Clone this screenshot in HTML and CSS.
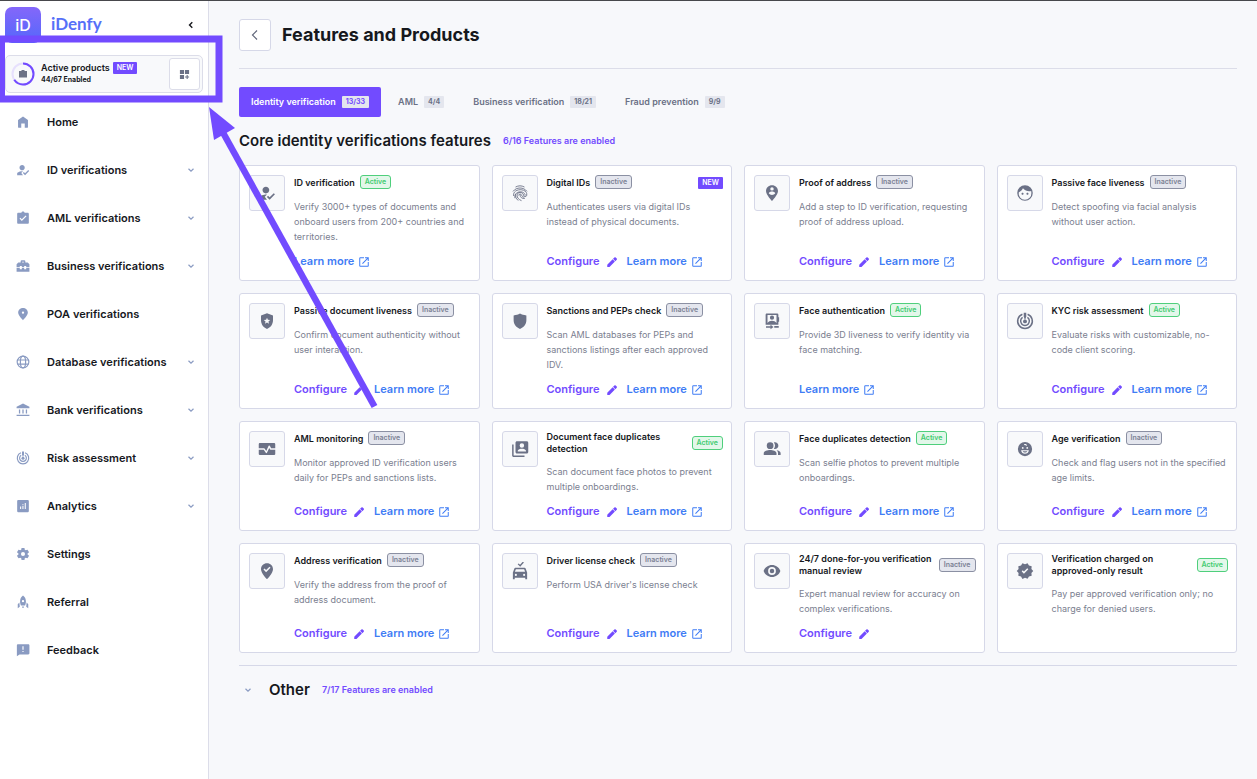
FILE: index.html
```html
<!DOCTYPE html>
<html lang="en">
<head>
  <meta charset="UTF-8">
  <meta name="viewport" content="width=device-width, initial-scale=1">
  <title>Features and Products</title>
  <link rel="stylesheet" href="styles.css">
</head>
<body>
  <!-- icon sprite -->
  <svg class="sprite" aria-hidden="true">
    <symbol id="i-home" viewBox="0 0 24 24"><path d="M12 2.500 3.500 8.500V21a.8.8 0 0 0 .8.8H9V14.500h6v7.300h4.700a.8.8 0 0 0 .8-.8V8.500z"/></symbol>
    <symbol id="i-user-check" viewBox="0 0 24 24"><path d="M9 17l3-2.940c-.39-.04-.68-.06-1-.06-2.670 0-9 1.340-9 4v3h10l-3-4zM10.500 12.500c2.500 0 4.500-2 4.500-4.500s-2-4.500-4.500-4.500S6 5.500 6 8s2 4.500 4.500 4.500zM15.500 21L11.800 17.200l1.600-1.600 2.100 2.100 5.500-5.500 1.600 1.600z"/></symbol>
    <symbol id="i-clipboard" viewBox="0 0 24 24"><path d="M20 3h-5.200C14.400 1.840 13.300 1 12 1s-2.400.84-2.820 2H4c-1.100 0-2 .9-2 2v15c0 1.100.9 2 2 2h16c1.100 0 2-.9 2-2V5c0-1.100-.9-2-2-2zM10 17l-4-4 1.410-1.410L10 14.170l6.590-6.590L18 9l-8 8z"/></symbol>
    <symbol id="i-briefcase" viewBox="0 0 24 24"><path fill-rule="evenodd" d="M16 6V4a2 2 0 0 0-2-2h-4a2 2 0 0 0-2 2v2H4L1 9v5h5.500v-2H10v2h4v-2h3.500v2H23V9l-3-3zm-5.500-1.500h3V6h-3zM1 15.500h5.500v2H10v-2h4v2h3.500v-2H23V22H1z"/></symbol>
    <symbol id="i-pin" viewBox="0 0 24 24"><path d="M12 1.500c-4.500 0-8.300 3.400-8.300 8C3.700 14.500 12 22.500 12 22.500s8.300-8 8.300-13c0-4.600-3.800-8-8.300-8zm0 10a2 2 0 1 1 0-4 2 2 0 0 1 0 4z"/></symbol>
    <symbol id="i-globe" viewBox="0 0 24 24"><g fill="none" stroke="currentColor" stroke-width="2"><circle cx="12" cy="12" r="10"/><ellipse cx="12" cy="12" rx="4.500" ry="10"/><path d="M2.500 8.500h19M2.500 15.500h19"/></g></symbol>
    <symbol id="i-bank" viewBox="0 0 24 24"><path d="M12 1 1 6.500V9h22V6.500zM5 11h2.200v7H5zM10.900 11h2.200v7h-2.200zM16.800 11H19v7h-2.200zM1 20h22v2.200H1z"/></symbol>
    <symbol id="i-radar" viewBox="0 0 24 24"><g fill="none" stroke="currentColor" stroke-width="2"><path d="M8.500 3A9.800 9.800 0 1 0 15.500 3"/><path d="M8.800 7.200a5.800 5.800 0 1 0 6.400 0"/></g><circle cx="12" cy="12.500" r="2.600"/><path d="M10.300 1h3.400v5L12 11l-1.700-5z"/></symbol>
    <symbol id="i-analytics" viewBox="0 0 24 24"><path fill-rule="evenodd" d="M4 1.500h16a2 2 0 0 1 2 2v17a2 2 0 0 1-2 2H4a2 2 0 0 1-2-2v-17c0-1.100.9-2 2-2zM7 13v4h1.800v-4zm4-1v5h1.800v-5zm0-3v1.800h1.800V9zm4-2v10h1.800V7z"/></symbol>
    <symbol id="i-gear" viewBox="1 1 22 22"><path d="M19.140 12.940c.04-.3.06-.61.06-.94 0-.32-.02-.64-.07-.94l2.030-1.580c.18-.14.23-.41.12-.61l-1.920-3.320c-.12-.22-.37-.29-.59-.22l-2.390.96c-.5-.38-1.030-.7-1.620-.94l-.36-2.540c-.04-.24-.24-.41-.48-.41h-3.840c-.24 0-.43.17-.47.41l-.36 2.540c-.59.24-1.130.57-1.620.94l-2.390-.96c-.22-.08-.47 0-.59.22L2.740 8.870c-.12.21-.08.47.12.61l2.030 1.580c-.05.3-.09.63-.09.94s.02.64.07.94l-2.030 1.580c-.18.14-.23.41-.12.61l1.920 3.320c.12.22.37.29.59.22l2.390-.96c.5.38 1.030.7 1.620.94l.36 2.540c.05.24.24.41.48.41h3.840c.24 0 .44-.17.47-.41l.36-2.540c.59-.24 1.130-.56 1.620-.94l2.390.96c.22.08.47 0 .59-.22l1.920-3.320c.12-.22.07-.47-.12-.61l-2.010-1.580zM12 15.200a3.200 3.200 0 1 1 0-6.400 3.200 3.200 0 0 1 0 6.400z"/></symbol>
    <symbol id="i-rocket" viewBox="0 0 24 24"><path fill-rule="evenodd" d="M12 1c-3.500 2.500-5 6-5 10 0 3 .7 5 1.500 7h7c.8-2 1.500-4 1.500-7 0-4-1.500-7.500-5-10zm0 7.500a2 2 0 1 1 0 4 2 2 0 0 1 0-4z"/><path d="M5.800 13 3 16v6.500l3.500-2.500zM18.200 13l2.800 3v6.500L17.500 20zM10.500 19.500h3V22h-3z"/></symbol>
    <symbol id="i-feedback" viewBox="0 0 24 24"><path d="M21 2H3.500c-1.100 0-2 .9-2 2v18.500L6 19.500h15c1.100 0 2-.9 2-2V4c0-1.100-.9-2-2-2zm-8 13.500h-2v-2h2v2zm0-4h-2v-6h2v6z"/></symbol>
    <symbol id="i-chevron" viewBox="0 0 10 10"><path d="M2.500 3.800 5 6.200l2.500-2.400" fill="none" stroke="currentColor" stroke-width="1.200"/></symbol>
    <symbol id="i-fingerprint" viewBox="0 0 24 24"><g fill="none" stroke="currentColor" stroke-width="1.200" stroke-linecap="round"><path d="M6.500 3.800c3.500-1.900 7.500-1.900 11 0M3 9.500C7 3.800 17 3.800 21 9.500M3.500 15.500C1.500 5 22.500 5 21 15c-.4 2.400-3.700 2.400-4.300 0C16.300 10 8 10 8 15c.2 3.300 2 5.600 5.500 7"/><path d="M5.200 18.500C3 8.500 19 8 18.900 15M12 15c.2 3 2.800 4.700 6 4.200M9.200 21.700c-3-3-3.500-5.200-3.200-7.700M10 14.800c.5-2 3.700-2 4.200.2.300 1.500 1.400 2.400 2.800 2.500"/></g></symbol>
    <symbol id="i-pin-person" viewBox="0 0 24 24"><path fill-rule="evenodd" d="M12 1.500c-4.500 0-8 3.300-8 7.800C4 14.500 12 22.500 12 22.500s8-8 8-13.200c0-4.500-3.500-7.800-8-7.800zM12 4.200a2.300 2.300 0 1 1 0 4.600 2.300 2.300 0 0 1 0-4.600zm0 10.300c-1.700 0-3.300-.8-4.300-2.200.1-1.400 2.800-2.200 4.300-2.200s4.200.8 4.300 2.200c-1 1.400-2.600 2.200-4.300 2.200z"/></symbol>
    <symbol id="i-face" viewBox="1 1 22 22"><path d="M9 11.750c-.69 0-1.250.56-1.250 1.250s.56 1.250 1.250 1.250 1.250-.56 1.250-1.250-.56-1.250-1.250-1.250zm6 0c-.69 0-1.250.56-1.250 1.250s.56 1.250 1.250 1.250 1.250-.56 1.250-1.250-.56-1.250-1.250-1.250z"/><path fill-rule="evenodd" d="M12 2.500a9.500 9.500 0 1 0 0 19 9.500 9.500 0 0 0 0-19zM4.300 11.300c2.300-1 4.200-2.800 5.200-5 1.900 2.300 4.700 3.700 7.900 3.700.8 0 1.500-.1 2.100-.3.200.7.300 1.500.3 2.300a7.800 7.800 0 1 1-15.500-.7z"/></symbol>
    <symbol id="i-shield-star" viewBox="0 0 24 24"><path fill-rule="evenodd" d="M12 1.500 4 4.500v6.500c0 5.300 3.400 10 8 11.500 4.600-1.500 8-6.200 8-11.500V4.500zm0 6 1.200 2.900 3.100.2-2.400 2 .8 3-2.700-1.600-2.700 1.600.8-3-2.400-2 3.100-.2z"/></symbol>
    <symbol id="i-shield" viewBox="0 0 24 24"><path d="M12 2C9.500 3.500 7 4 3.500 4.500V11c0 6 4 9.700 8.500 11.500 4.500-1.800 8.500-5.500 8.500-11.500V4.500C17 4 14.500 3.500 12 2z"/></symbol>
    <symbol id="i-face-auth" viewBox="0 0 24 24"><path fill-rule="evenodd" d="M5 2h14a1.500 1.500 0 0 1 1.500 1.500V7h1v6h-1v4H3.500V3.500C3.500 2.700 4.200 2 5 2zm1 2v10.500c1.500-2 3.500-3 6-3s4.500 1 6 3V4zm6 .8a2.800 2.800 0 1 1 0 5.600 2.800 2.800 0 0 1 0-5.600z"/><path d="M4 19h6v-2l4 3-4 3v-2H4zM15 18.500h6V21h-6z"/></symbol>
    <symbol id="i-pulse" viewBox="0 0 24 24"><path d="M2.500 4h19A1.500 1.500 0 0 1 23 5.500V11h-5.500l-1.700-3.200a1 1 0 0 0-1.800.1l-3 6.600-2-3a1 1 0 0 0-.8-.5H1V5.500C1 4.700 1.700 4 2.500 4zM1 13h6.700l2.700 3.900a1 1 0 0 0 1.700-.2l2.900-6.200 1.200 2c.2.300.500.500.8.500h6v5.500a1.500 1.500 0 0 1-1.500 1.500h-19A1.500 1.500 0 0 1 1 18.500z"/></symbol>
    <symbol id="i-copy-face" viewBox="0 0 24 24"><path fill-rule="evenodd" d="M3.500 6H1.500v14.500c0 1.100.9 2 2 2H18v-2H3.500zM21 1.500H8c-1.100 0-2 .9-2 2V16c0 1.100.9 2 2 2h13c1.100 0 2-.9 2-2V3.500c0-1.100-.9-2-2-2zm-6.500 2.800a3 3 0 1 1 0 6 3 3 0 0 1 0-6zm5.500 11H9v-1c0-2 3.500-2.800 5.500-2.800s5.500.8 5.500 2.800z"/></symbol>
    <symbol id="i-group" viewBox="0 0 24 24"><circle cx="9.500" cy="7.500" r="4.500"/><path d="M1 20v-2.500c0-3 5-4.300 8.500-4.300s8.500 1.300 8.500 4.300V20zM14.500 3.300c3-1 6 1.300 6 4.200s-3 5.200-6 4.200c2-2.500 2-6 0-8.400zM18 13.600c3 .5 5.500 1.600 5.500 3.900V20H20v-2.500c0-1.600-.7-2.900-2-3.900z"/></symbol>
    <symbol id="i-age" viewBox="0 0 24 24"><path fill-rule="evenodd" d="M12 2.500a9.500 9.500 0 1 0 0 19 9.500 9.500 0 0 0 0-19zM10.500 6c2-1.300 4.300-.3 4 1.700l-1.500-.2c0-.8-.7-1-1.500-.4zM9 9.300a1.200 1.200 0 1 1 0 2.400 1.200 1.200 0 0 1 0-2.400zm6 0a1.200 1.200 0 1 1 0 2.400 1.200 1.200 0 0 1 0-2.400zM6.800 13.500h10.400c-.4 3-2.500 4.800-5.200 4.800s-4.800-1.800-5.200-4.800zm2.200 1.400c.7 1.300 1.700 1.900 3 1.900s2.300-.6 3-1.900z"/></symbol>
    <symbol id="i-pin-check" viewBox="0 0 24 24"><path d="M12 1.500c-4.500 0-8 3.400-8 8C4 15 12 22.800 12 22.800S20 15 20 9.500c0-4.600-3.500-8-8-8zm-1.200 12L7.300 10l1.400-1.400 2.100 2.100 4.500-4.500 1.400 1.400z"/></symbol>
    <symbol id="i-car" viewBox="0 0 24 24"><path fill-rule="evenodd" d="M19.500 8.500c-.2-.6-.7-1-1.300-1H5.800c-.6 0-1.100.4-1.300 1L2.500 14v9H5v-2h14v2h2.500v-9zM6.500 9.500h11l1.300 3.500H5.200zM6.500 15.800a1.400 1.400 0 1 1 0 2.800 1.400 1.400 0 0 1 0-2.800zm11 0a1.400 1.400 0 1 1 0 2.800 1.400 1.400 0 0 1 0-2.800z"/><path d="m9.500 2.500 2.700 2.500L16.500 0" fill="none" stroke="currentColor" stroke-width="1.800"/></symbol>
    <symbol id="i-eye" viewBox="0 0 24 24"><path d="M12 4C7 4 2.500 7.300.8 12c1.700 4.700 6.200 8 11.200 8s9.500-3.300 11.200-8C21.500 7.300 17 4 12 4zm0 13.200a5.200 5.200 0 1 1 0-10.400 5.200 5.200 0 0 1 0 10.400zM12 9a3 3 0 1 0 0 6 3 3 0 0 0 0-6z"/></symbol>
    <symbol id="i-verified" viewBox="0 0 24 24"><path d="M23 12l-2.440-2.790.34-3.690-3.610-.82-1.890-3.200L12 2.960 8.600 1.500 6.710 4.690 3.100 5.500l.34 3.700L1 12l2.440 2.790-.34 3.700 3.610.82L8.600 22.500l3.400-1.470 3.400 1.460 1.890-3.190 3.610-.82-.34-3.690L23 12zM10.600 15.500l-3-3L9 11.100l1.600 1.600L15 8.300l1.400 1.400z"/></symbol>
    <symbol id="i-edit" viewBox="0 0 24 24"><path d="M2.500 17.500v4.300H7L17.800 11 13.300 6.500zM21.500 7.500c.7-.7.7-1.700 0-2.400l-2.200-2.200c-.7-.7-1.700-.7-2.400 0l-2.800 2.800 4.600 4.600z"/></symbol>
    <symbol id="i-open" viewBox="0 0 24 24"><path d="M19.500 19.500h-15v-15H12v-2H4.500a2 2 0 0 0-2 2v15a2 2 0 0 0 2 2h15c1.100 0 2-.9 2-2V12h-2v7.500zM14 2.500v2h4l-9.800 9.800 1.500 1.500L19.500 6v4h2V2.500z"/></symbol>
  </svg>

  <div class="layout">
    <aside class="sidebar">
      <div class="brand">
        <a class="brand-link" href="#">
          <span class="brand-tile">iD</span>
          <span class="brand-name">iDenfy</span>
        </a>
        <button class="collapse" aria-label="Collapse menu"><svg viewBox="0 0 12 12"><path d="M7.300 3.200 4.500 6l2.800 2.800" fill="none" stroke="currentColor" stroke-width="1.400"/></svg></button>
      </div>

      <div class="products">
        <svg class="ring" viewBox="0 0 24 24">
          <circle class="ring-track" cx="12" cy="12" r="10.500"/>
          <circle class="ring-value" cx="12" cy="12" r="10.500" pathLength="67" stroke-dasharray="44 67" transform="rotate(-90 12 12)"/>
          <path class="ring-bag" d="M10.500 9V8h3v1H16v6.500H8V9z"/>
        </svg>
        <div class="products-text">
          <div class="products-title">Active products <span class="new">NEW</span></div>
          <div class="products-count">44/67 Enabled</div>
        </div>
        <button class="products-btn" aria-label="Manage products"><svg viewBox="0 0 12 12"><path d="M1 1h4.500v4.500H1zM6.500 1H11v4.500H6.500zM1 6.500h4.500V11H1zM8.300 6.500h1.200v1.700H11v1.200H9.500V11H8.300V9.400H6.600V8.200h1.700z"/></svg></button>
      </div>

      <nav class="nav">
        <a class="nav-item" href="#"><svg class="nav-icon"><use href="#i-home"/></svg><span>Home</span></a>
        <button class="nav-item"><svg class="nav-icon"><use href="#i-user-check"/></svg><span>ID verifications</span><svg class="chevron"><use href="#i-chevron"/></svg></button>
        <button class="nav-item"><svg class="nav-icon"><use href="#i-clipboard"/></svg><span>AML verifications</span><svg class="chevron"><use href="#i-chevron"/></svg></button>
        <button class="nav-item"><svg class="nav-icon"><use href="#i-briefcase"/></svg><span>Business verifications</span><svg class="chevron"><use href="#i-chevron"/></svg></button>
        <a class="nav-item" href="#"><svg class="nav-icon"><use href="#i-pin"/></svg><span>POA verifications</span></a>
        <button class="nav-item"><svg class="nav-icon"><use href="#i-globe"/></svg><span>Database verifications</span><svg class="chevron"><use href="#i-chevron"/></svg></button>
        <button class="nav-item"><svg class="nav-icon"><use href="#i-bank"/></svg><span>Bank verifications</span><svg class="chevron"><use href="#i-chevron"/></svg></button>
        <button class="nav-item"><svg class="nav-icon"><use href="#i-radar"/></svg><span>Risk assessment</span><svg class="chevron"><use href="#i-chevron"/></svg></button>
        <button class="nav-item"><svg class="nav-icon"><use href="#i-analytics"/></svg><span>Analytics</span><svg class="chevron"><use href="#i-chevron"/></svg></button>
        <a class="nav-item" href="#"><svg class="nav-icon"><use href="#i-gear"/></svg><span>Settings</span></a>
        <a class="nav-item" href="#"><svg class="nav-icon"><use href="#i-rocket"/></svg><span>Referral</span></a>
        <a class="nav-item" href="#"><svg class="nav-icon"><use href="#i-feedback"/></svg><span>Feedback</span></a>
      </nav>
    </aside>

    <main class="main">
      <header class="page-head">
        <button class="back" aria-label="Back"><svg viewBox="0 0 12 12"><path d="M8 1.500 3.500 6 8 10.500" fill="none" stroke="currentColor" stroke-width="1.200"/></svg></button>
        <h1>Features and Products</h1>
      </header>

      <div class="tabs">
        <button class="tab active">Identity verification <span class="tab-count">13/33</span></button>
        <button class="tab">AML <span class="tab-count">4/4</span></button>
        <button class="tab">Business verification <span class="tab-count">18/21</span></button>
        <button class="tab">Fraud prevention <span class="tab-count">9/9</span></button>
      </div>

      <div class="section-head">
        <h2>Core identity verifications features</h2>
        <span class="enabled">6/16 Features are enabled</span>
      </div>

      <div class="grid">
        <article class="card">
          <div class="card-icon"><svg><use href="#i-user-check"/></svg></div>
          <div class="card-body">
            <div class="card-head"><h3>ID verification</h3><span class="badge on">Active</span></div>
            <p>Verify 3000+ types of documents and onboard users from 200+ countries and territories.</p>
            <div class="links"><a class="learn" href="#">Learn more<svg><use href="#i-open"/></svg></a></div>
          </div>
        </article>
        <article class="card">
          <div class="card-icon"><svg><use href="#i-fingerprint"/></svg></div>
          <div class="card-body">
            <div class="card-head"><h3>Digital IDs</h3><span class="badge">Inactive</span><span class="new">NEW</span></div>
            <p>Authenticates users via digital IDs instead of physical documents.</p>
            <div class="links"><a class="configure" href="#">Configure<svg><use href="#i-edit"/></svg></a><a class="learn" href="#">Learn more<svg><use href="#i-open"/></svg></a></div>
          </div>
        </article>
        <article class="card">
          <div class="card-icon"><svg><use href="#i-pin-person"/></svg></div>
          <div class="card-body">
            <div class="card-head"><h3>Proof of address</h3><span class="badge">Inactive</span></div>
            <p>Add a step to ID verification, requesting proof of address upload.</p>
            <div class="links"><a class="configure" href="#">Configure<svg><use href="#i-edit"/></svg></a><a class="learn" href="#">Learn more<svg><use href="#i-open"/></svg></a></div>
          </div>
        </article>
        <article class="card">
          <div class="card-icon"><svg><use href="#i-face"/></svg></div>
          <div class="card-body">
            <div class="card-head"><h3>Passive face liveness</h3><span class="badge">Inactive</span></div>
            <p>Detect spoofing via facial analysis without user action.</p>
            <div class="links"><a class="configure" href="#">Configure<svg><use href="#i-edit"/></svg></a><a class="learn" href="#">Learn more<svg><use href="#i-open"/></svg></a></div>
          </div>
        </article>

        <article class="card">
          <div class="card-icon"><svg><use href="#i-shield-star"/></svg></div>
          <div class="card-body">
            <div class="card-head"><h3>Passive document liveness</h3><span class="badge">Inactive</span></div>
            <p>Confirm document authenticity without user interaction.</p>
            <div class="links"><a class="configure" href="#">Configure<svg><use href="#i-edit"/></svg></a><a class="learn" href="#">Learn more<svg><use href="#i-open"/></svg></a></div>
          </div>
        </article>
        <article class="card">
          <div class="card-icon"><svg><use href="#i-shield"/></svg></div>
          <div class="card-body">
            <div class="card-head"><h3>Sanctions and PEPs check</h3><span class="badge">Inactive</span></div>
            <p>Scan AML databases for PEPs and sanctions listings after each approved IDV.</p>
            <div class="links"><a class="configure" href="#">Configure<svg><use href="#i-edit"/></svg></a><a class="learn" href="#">Learn more<svg><use href="#i-open"/></svg></a></div>
          </div>
        </article>
        <article class="card">
          <div class="card-icon"><svg><use href="#i-face-auth"/></svg></div>
          <div class="card-body">
            <div class="card-head"><h3>Face authentication</h3><span class="badge on">Active</span></div>
            <p>Provide 3D liveness to verify identity via face matching.</p>
            <div class="links"><a class="learn" href="#">Learn more<svg><use href="#i-open"/></svg></a></div>
          </div>
        </article>
        <article class="card">
          <div class="card-icon"><svg><use href="#i-radar"/></svg></div>
          <div class="card-body">
            <div class="card-head"><h3>KYC risk assessment</h3><span class="badge on">Active</span></div>
            <p>Evaluate risks with customizable, no-code client scoring.</p>
            <div class="links"><a class="configure" href="#">Configure<svg><use href="#i-edit"/></svg></a><a class="learn" href="#">Learn more<svg><use href="#i-open"/></svg></a></div>
          </div>
        </article>

        <article class="card">
          <div class="card-icon"><svg><use href="#i-pulse"/></svg></div>
          <div class="card-body">
            <div class="card-head"><h3>AML monitoring</h3><span class="badge">Inactive</span></div>
            <p>Monitor approved ID verification users daily for PEPs and sanctions lists.</p>
            <div class="links"><a class="configure" href="#">Configure<svg><use href="#i-edit"/></svg></a><a class="learn" href="#">Learn more<svg><use href="#i-open"/></svg></a></div>
          </div>
        </article>
        <article class="card">
          <div class="card-icon"><svg><use href="#i-copy-face"/></svg></div>
          <div class="card-body">
            <div class="card-head"><h3>Document face duplicates detection</h3><span class="badge on">Active</span></div>
            <p>Scan document face photos to prevent multiple onboardings.</p>
            <div class="links"><a class="configure" href="#">Configure<svg><use href="#i-edit"/></svg></a><a class="learn" href="#">Learn more<svg><use href="#i-open"/></svg></a></div>
          </div>
        </article>
        <article class="card">
          <div class="card-icon"><svg><use href="#i-group"/></svg></div>
          <div class="card-body">
            <div class="card-head"><h3>Face duplicates detection</h3><span class="badge on">Active</span></div>
            <p>Scan selfie photos to prevent multiple onboardings.</p>
            <div class="links"><a class="configure" href="#">Configure<svg><use href="#i-edit"/></svg></a><a class="learn" href="#">Learn more<svg><use href="#i-open"/></svg></a></div>
          </div>
        </article>
        <article class="card">
          <div class="card-icon"><svg><use href="#i-age"/></svg></div>
          <div class="card-body">
            <div class="card-head"><h3>Age verification</h3><span class="badge">Inactive</span></div>
            <p>Check and flag users not in the specified age limits.</p>
            <div class="links"><a class="configure" href="#">Configure<svg><use href="#i-edit"/></svg></a><a class="learn" href="#">Learn more<svg><use href="#i-open"/></svg></a></div>
          </div>
        </article>

        <article class="card">
          <div class="card-icon"><svg><use href="#i-pin-check"/></svg></div>
          <div class="card-body">
            <div class="card-head"><h3>Address verification</h3><span class="badge">Inactive</span></div>
            <p>Verify the address from the proof of address document.</p>
            <div class="links"><a class="configure" href="#">Configure<svg><use href="#i-edit"/></svg></a><a class="learn" href="#">Learn more<svg><use href="#i-open"/></svg></a></div>
          </div>
        </article>
        <article class="card">
          <div class="card-icon"><svg><use href="#i-car"/></svg></div>
          <div class="card-body">
            <div class="card-head"><h3>Driver license check</h3><span class="badge">Inactive</span></div>
            <p>Perform USA driver's license check</p>
            <div class="links"><a class="configure" href="#">Configure<svg><use href="#i-edit"/></svg></a><a class="learn" href="#">Learn more<svg><use href="#i-open"/></svg></a></div>
          </div>
        </article>
        <article class="card">
          <div class="card-icon"><svg><use href="#i-eye"/></svg></div>
          <div class="card-body">
            <div class="card-head"><h3>24/7 done-for-you verification manual review</h3><span class="badge">Inactive</span></div>
            <p>Expert manual review for accuracy on complex verifications.</p>
            <div class="links"><a class="configure" href="#">Configure<svg><use href="#i-edit"/></svg></a></div>
          </div>
        </article>
        <article class="card">
          <div class="card-icon"><svg><use href="#i-verified"/></svg></div>
          <div class="card-body">
            <div class="card-head"><h3>Verification charged on approved-only result</h3><span class="badge on">Active</span></div>
            <p>Pay per approved verification only; no charge for denied users.</p>
          </div>
        </article>
      </div>

      <div class="other">
        <button class="other-toggle" aria-label="Show other features"><svg class="chevron"><use href="#i-chevron"/></svg></button>
        <h2>Other</h2>
        <span class="enabled">7/17 Features are enabled</span>
      </div>
    </main>
  </div>

  <!-- highlight frame and arrow over the page -->
  <svg class="pointer" viewBox="0 0 400 420" aria-hidden="true">
    <rect x="1.500" y="39" width="217.500" height="60" fill="none" stroke="#724bff" stroke-width="7"/>
    <path d="M221 129 374.500 406.500" stroke="#724bff" stroke-width="6.500"/>
    <path d="M209 107 235 128 214 140z" fill="#724bff"/>
  </svg>
</body>
</html>
```

FILE: styles.css
```css
* {
  box-sizing: border-box;
}
body {
  margin: 0;
  background: #f7f8fb;
  color: #16181d;
  font-family: Inter, "Liberation Sans", sans-serif;
  font-size: 9px;
  border-top: 1px solid #47484c;
  position: relative;
}
h1, h2, h3, p {
  margin: 0;
}
a {
  color: inherit;
  text-decoration: none;
}
button {
  font-family: inherit;
  color: inherit;
  background: none;
  border: 0;
  padding: 0;
  cursor: pointer;
}
svg {
  display: block;
  flex: none;
  fill: currentColor;
}
.sprite {
  position: absolute;
  width: 0;
  height: 0;
}
.layout {
  display: flex;
  min-height: calc(100vh - 1px);
}

/* sidebar */
.sidebar {
  width: 209px;
  flex: none;
  background: #fff;
  border-right: 1px solid #dcdde9;
}
.brand {
  display: flex;
  justify-content: space-between;
  padding: 6px 11px 0 5px;
}
.brand-link {
  display: flex;
  gap: 10px;
}
.brand-tile {
  width: 36px;
  height: 36px;
  border-radius: 7px;
  background: linear-gradient(#8467fa, #5468fb);
  color: #fff;
  font-size: 16px;
  font-weight: 500;
  line-height: 36px;
  text-align: center;
}
.brand-name {
  font-family: Lato, sans-serif;
  font-size: 17px;
  font-weight: bold;
  line-height: 34px;
  color: #5670f8;
}
.collapse {
  height: 36px;
}
.collapse svg {
  width: 12px;
  height: 12px;
}
.products {
  display: flex;
  align-items: center;
  height: 38px;
  margin: 12px 5px 5px;
  padding: 0 2px 0 5px;
  background: #f8f9fb;
  border: 1px solid #dcdde9;
  border-radius: 5px;
}
.ring {
  width: 24px;
  height: 24px;
}
.ring circle {
  fill: none;
  stroke-width: 2;
}
.ring .ring-track {
  stroke: #e6e0fd;
}
.ring .ring-value {
  stroke: #724bff;
}
.ring-bag {
  fill: #6b7186;
}
.products-text {
  flex: 1;
  margin-left: 6px;
}
.products-title {
  display: flex;
  align-items: center;
  gap: 3px;
  font-weight: 600;
  line-height: 12px;
}
.products-count {
  font-size: 7px;
  font-weight: 700;
  line-height: 12px;
}
.products-btn {
  display: grid;
  place-items: center;
  width: 31px;
  height: 32px;
  background: #fff;
  border: 1px solid #dcdde9;
  border-radius: 3px;
  color: #6b7186;
}
.products-btn svg {
  width: 11px;
  height: 11px;
}
.new {
  padding: 0 4px;
  border-radius: 1px;
  background: #724bff;
  color: #fff;
  font-size: 7px;
  font-weight: 600;
  line-height: 12px;
}
.nav-item {
  display: flex;
  align-items: center;
  width: 100%;
  height: 48px;
  padding: 0 12px 0 16px;
  font-size: 11px;
  font-weight: 600;
  text-align: left;
}
.nav-icon {
  width: 14px;
  height: 14px;
  margin-right: 17px;
  color: #8a9bc2;
}
.chevron {
  width: 10px;
  height: 10px;
  color: #8a9bc2;
}
.nav-item .chevron {
  margin-left: auto;
}

/* content */
.main {
  flex: 1;
  min-width: 0;
  padding: 18px 20px 30px 30px;
}
.page-head {
  display: flex;
  align-items: center;
  gap: 11px;
  padding-bottom: 17px;
  border-bottom: 1px solid #dcdde9;
}
.back {
  display: grid;
  place-items: center;
  width: 32px;
  height: 32px;
  background: #fff;
  border: 1px solid #d6d8e8;
  border-radius: 3px;
  color: #5f6579;
}
.back svg {
  width: 12px;
  height: 12px;
}
h1 {
  font-size: 18px;
  font-weight: 700;
  line-height: 20px;
}
.tabs {
  display: flex;
  gap: 5px;
  margin-top: 18px;
}
.tab {
  display: flex;
  align-items: center;
  gap: 6px;
  height: 30px;
  padding: 0 12px;
  border-radius: 2px;
  color: #6b7186;
  font-size: 9px;
  font-weight: 600;
  line-height: 12px;
}
.tab.active {
  background: #724bff;
  color: #fff;
}
.tab-count {
  padding: 0 4px;
  border-radius: 1px;
  background: #e4e6ee;
  color: #6b7186;
  font-size: 7px;
  font-weight: 700;
}
.tab.active .tab-count {
  color: #724bff;
}
.section-head {
  display: flex;
  align-items: center;
  gap: 12px;
  margin: 14px 0;
}
h2 {
  font-size: 15px;
  font-weight: 600;
  line-height: 20px;
}
.enabled {
  color: #724bff;
  font-size: 9px;
  font-weight: 600;
  line-height: 12px;
}
.grid {
  display: grid;
  grid-template-columns: repeat(4, 1fr);
  gap: 12px;
}
.card {
  display: flex;
  gap: 9px;
  padding: 9px 8px 11px 9px;
  background: #fff;
  border: 1px solid #d6d8e8;
  border-radius: 3px;
}
.card-icon {
  display: grid;
  place-items: center;
  flex: none;
  width: 36px;
  height: 36px;
  background: #f8f9fb;
  border: 1px solid #d6d8e8;
  border-radius: 3px;
  color: #6b7186;
}
.card-icon svg {
  width: 18px;
  height: 18px;
}
.card-body {
  display: flex;
  flex-direction: column;
  flex: 1;
}
.card-head {
  display: flex;
  align-items: center;
  gap: 5px;
}
.card-head .new {
  margin-left: auto;
}
h3 {
  font-size: 9px;
  font-weight: 600;
  line-height: 12px;
}
.badge {
  flex: none;
  margin-bottom: 1px;
  padding: 0 4px;
  border: 1px solid #8b90a3;
  border-radius: 3px;
  background: #e4e6ee;
  color: #7b8194;
  font-size: 7px;
  font-weight: 600;
  line-height: 12px;
}
.badge.on {
  border-color: #4fcf7c;
  background: #e3f7ea;
  color: #3fcb70;
}
.card p {
  margin: 9px 0 10px;
  color: #7b8090;
  line-height: 15px;
}
.links {
  display: flex;
  gap: 9px;
  margin-top: auto;
  font-size: 11px;
  font-weight: 600;
  line-height: 15px;
}
.links a {
  display: flex;
  align-items: center;
}
.links svg {
  width: 12px;
  height: 12px;
}
.configure {
  gap: 6px;
  color: #724bff;
}
.learn {
  gap: 4px;
  color: #3f7cf5;
}
.other {
  display: flex;
  align-items: center;
  gap: 12px;
  margin-top: 12px;
  padding: 14px 0 0 4px;
  border-top: 1px solid #d6d8e8;
}
.other-toggle {
  padding-right: 4px;
}

.pointer {
  position: absolute;
  top: -1px;
  left: 0;
  width: 400px;
  height: 420px;
  pointer-events: none;
}
@media (max-width: 1000px) {
  .grid {
    grid-template-columns: repeat(2, 1fr);
  }
}
```
